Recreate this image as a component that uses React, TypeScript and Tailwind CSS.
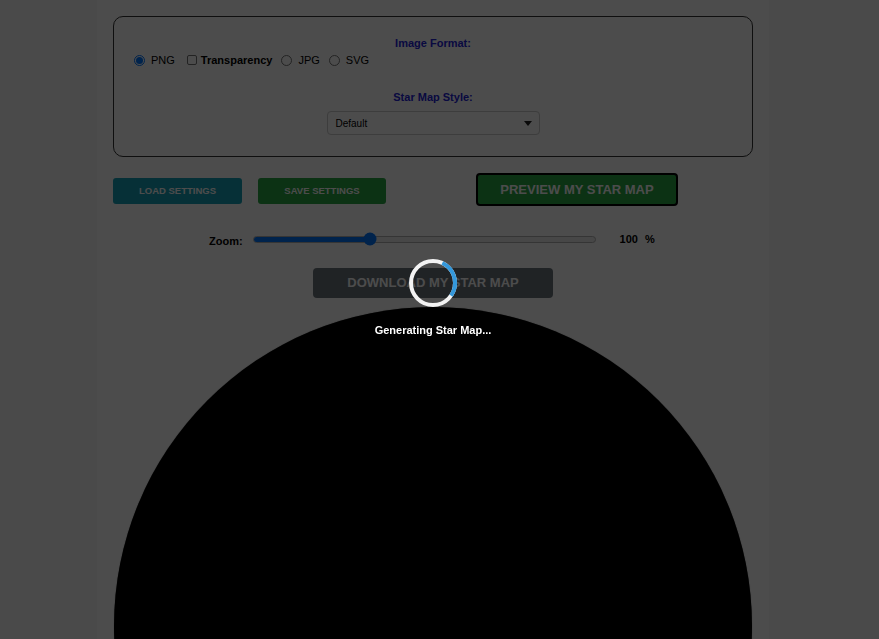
import { useState } from "react";

const Radio = ({ label, checked }: { label: string; checked?: boolean }) => (
  <label className="flex items-center gap-[6px]">
    <span
      className={
        checked
          ? "flex h-[11px] w-[11px] items-center justify-center rounded-full border border-[#0075ff] bg-white"
          : "h-[11px] w-[11px] rounded-full border border-[#767676] bg-white"
      }
    >
      {checked && <span className="h-[7px] w-[7px] rounded-full bg-[#0075ff]" />}
    </span>
    <span>{label}</span>
  </label>
);

const Spinner = () => (
  <svg width="50" height="50" viewBox="0 0 50 50">
    <circle cx="25" cy="25" r="22" fill="none" stroke="#f3f3f3" strokeWidth="4" />
    {/* blue arc, roughly 25deg -> 125deg clockwise from 12 o'clock */}
    <path
      d="M 34.3 5.06 A 22 22 0 0 1 43.02 37.62"
      fill="none"
      stroke="#3498db"
      strokeWidth="4"
    />
  </svg>
);

export default function App() {
  const [zoom] = useState(34);

  return (
    <div className="relative h-screen overflow-hidden bg-[#f7f7f7] font-['Liberation_Sans',Arial,sans-serif] text-black">
      <div className="w-[866px]">
        <div className="mx-auto flex min-h-screen w-[672px] flex-col bg-white px-4 pt-4">
          {/* format + style card */}
          <div className="flex flex-col rounded-[10px] border border-[#333] px-5 pb-[21px] pt-[20px]">
            <p className="text-center text-[11px] font-bold leading-[13px] text-[#2222d8]">Image Format:</p>
            <div className="mt-[3px] flex items-center gap-[9px] text-[11px] leading-[14px]">
              <Radio label="PNG" checked />
              <label className="ml-[3px] flex items-center gap-[4px] font-bold">
                <span className="h-[10px] w-[10px] rounded-[2px] border border-[#767676] bg-white" />
                Transparency
              </label>
              <Radio label="JPG" />
              <Radio label="SVG" />
            </div>
            <p className="mt-[24px] text-center text-[11px] font-bold leading-[13px] text-[#2222d8]">
              Star Map Style:
            </p>
            <div className="mt-[7px] flex justify-center">
              <div className="flex h-[24px] w-[213px] items-center justify-between rounded-[4px] border border-[#ccc] bg-white pl-[8px] pr-[7px] text-[10px]">
                <span>Default</span>
                <svg width="8" height="5" viewBox="0 0 8 5">
                  <path d="M0 0 L8 0 L4 5 Z" fill="#222" />
                </svg>
              </div>
            </div>
          </div>

          {/* buttons */}
          <div className="mt-[16px] flex items-start">
            <button className="mt-[5px] h-[26px] w-[129px] rounded-[3px] bg-[#17a2b8] text-[9.5px] font-bold text-white">
              LOAD SETTINGS
            </button>
            <button className="ml-[16px] mt-[5px] h-[26px] w-[128px] rounded-[3px] bg-[#28a745] text-[9.5px] font-bold text-white">
              SAVE SETTINGS
            </button>
            <button className="ml-[90px] h-[33px] w-[202px] rounded-[4px] border-2 border-black bg-[#28a745] text-[13px] font-bold text-white">
              PREVIEW MY STAR MAP
            </button>
          </div>

          {/* zoom */}
          <div className="mt-[23px] flex items-center text-[11px] font-bold">
            <span className="ml-[96px] mt-[4px]">Zoom:</span>
            <div className="relative ml-[10px] h-[7px] w-[343px] rounded-full border border-[#b2b2b2] bg-[#efefef]">
              <div className="h-full rounded-full bg-[#0075ff]" style={{ width: `${zoom}%` }} />
              <div
                className="absolute top-1/2 h-[13px] w-[13px] -translate-x-1/2 -translate-y-1/2 rounded-full bg-[#0075ff]"
                style={{ left: `${zoom}%` }}
              />
            </div>
            <span className="ml-[24px]">100</span>
            <span className="ml-[7px]">%</span>
          </div>

          {/* download */}
          <div className="mt-[18px] flex justify-center">
            <button className="h-[30px] w-[240px] rounded-[4px] bg-[#6c757d] text-[13px] font-bold text-white">
              DOWNLOAD MY STAR MAP
            </button>
          </div>

          {/* star map */}
          <div className="mt-[9px] flex justify-center">
            <div className="h-[638px] w-[638px] shrink-0 rounded-full bg-black shadow-[0_0_1px_#777]" />
          </div>
        </div>
      </div>

      {/* loading overlay */}
      <div className="fixed inset-0 z-10 bg-black/70" />
      <div className="absolute left-[333px] top-[258px] z-20 flex w-[200px] flex-col items-center">
        <Spinner />
        <p className="mt-[14px] text-[11px] font-bold text-white">Generating Star Map...</p>
      </div>
    </div>
  );
}
